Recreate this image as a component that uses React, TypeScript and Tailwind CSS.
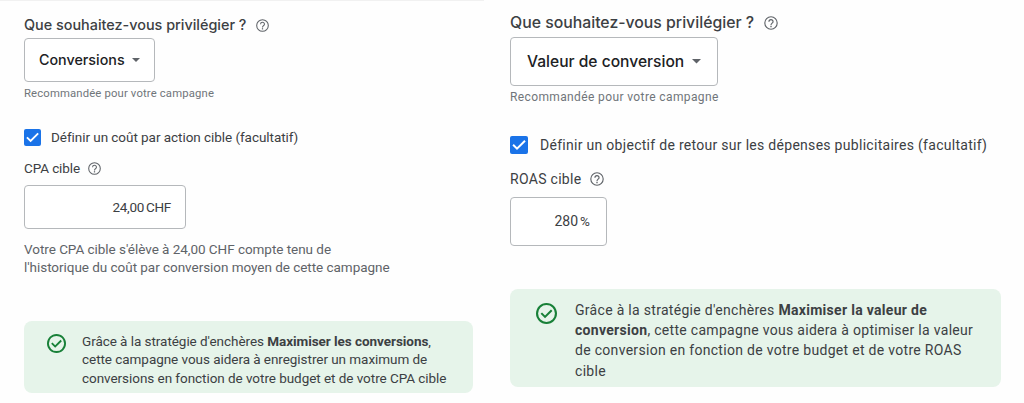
import type { ReactNode } from "react";

function HelpIcon({ className }: { className: string }) {
  return (
    <svg
      viewBox="0 0 24 24"
      fill="none"
      stroke="#5f6368"
      strokeWidth="1.7"
      className={`shrink-0 ${className}`}
    >
      <circle cx="12" cy="12" r="9.3" />
      <path d="M8.9 10a3.1 3.1 0 1 1 6.2 0c0 2.1-3.1 2.5-3.1 5" />
      <path d="M12 16.3v2" strokeWidth="2" />
    </svg>
  );
}

function Caret({ className }: { className: string }) {
  return (
    <svg viewBox="0 0 10 5" fill="#5f6368" className={`shrink-0 ${className}`}>
      <path d="M0 0h10L5 5z" />
    </svg>
  );
}

function CheckBox({ className }: { className: string }) {
  return (
    <span
      role="checkbox"
      aria-checked="true"
      className={`block shrink-0 rounded-[2px] bg-[#1a73e8] ${className}`}
    >
      <svg viewBox="0 0 18 18" className="block w-full h-full" fill="none">
        <path d="M3.1 8.8 7 12.7 15 4.7" stroke="#fff" strokeWidth="2" />
      </svg>
    </span>
  );
}

function Notice({
  className,
  iconClassName,
  children,
}: {
  className: string;
  iconClassName: string;
  children: ReactNode;
}) {
  return (
    <div
      className={`flex items-start rounded-lg bg-[#e6f4ea] text-[#3c4043] ${className}`}
    >
      <svg
        viewBox="2 2 20 20"
        fill="#188038"
        className={`shrink-0 ${iconClassName}`}
      >
        <path d="m10.6 16.6 7.05-7.05-1.4-1.4-5.65 5.65-2.85-2.85-1.4 1.4ZM12 22q-2.075 0-3.9-.788a10.1 10.1 0 0 1-3.175-2.137q-1.35-1.35-2.137-3.175A9.7 9.7 0 0 1 2 12q0-2.075.788-3.9a10.1 10.1 0 0 1 2.137-3.175q1.35-1.35 3.175-2.137A9.7 9.7 0 0 1 12 2q2.075 0 3.9.788a10.1 10.1 0 0 1 3.175 2.137q1.35 1.35 2.137 3.175A9.7 9.7 0 0 1 22 12q0 2.075-.788 3.9a10.1 10.1 0 0 1-2.137 3.175q-1.35 1.35-3.175 2.137A9.7 9.7 0 0 1 12 22m0-2q3.35 0 5.675-2.325T20 12t-2.325-5.675T12 4 6.325 6.325 4 12t2.325 5.675T12 20" />
      </svg>
      <p>{children}</p>
    </div>
  );
}

function ConversionsPanel() {
  return (
    <section className="w-[484px] shrink-0 pl-6 pt-[15px] border-t border-[#f1f1f1]">
      {/* Goal */}
      <div className="flex items-center h-[18px]">
        <h2 className="font-['Inter',sans-serif] font-medium text-[14.4px] text-[#3c4043] whitespace-nowrap">
          Que souhaitez-vous privilégier ?
        </h2>
        <HelpIcon className="ml-[9px] w-[15px] h-[15px]" />
      </div>
      <button
        type="button"
        className="mt-1 flex items-center w-[131px] h-[44px] pl-[14px] rounded-[4px] border border-[#b5b8bb] bg-white font-['Inter',sans-serif] font-medium text-[14.3px] text-[#202124]"
      >
        Conversions
        <Caret className="ml-[7px] w-2 h-1" />
      </button>
      <p className="mt-1 text-[11.3px] leading-4 tracking-[0.15px] text-[#70757a]">
        Recommandée pour votre campagne
      </p>

      {/* Target CPA */}
      <div className="mt-[26px] flex items-center h-[18px] text-[13.5px] tracking-[-0.05px] text-[#3c4043]">
        <CheckBox className="w-[17px] h-[17px] mr-[10px]" />
        Définir un coût par action cible (facultatif)
      </div>
      <div className="mt-[13px] flex items-center h-[18px] text-[13.5px] tracking-[-0.1px] text-[#3c4043]">
        CPA cible
        <HelpIcon className="ml-[7px] w-[15px] h-[15px]" />
      </div>
      <div className="mt-2 flex items-center justify-end w-[162px] h-[44px] pt-px pr-[14px] rounded-[4px] border border-[#b5b8bb] bg-white text-[13.5px] text-[#3c4043]">
        <span className="tracking-[-0.3px]">24,00</span>
        <span className="ml-[2px] tracking-[-0.3px]">CHF</span>
      </div>
      <p className="mt-[11px] text-[13.5px] leading-[18.4px] tracking-[-0.04px] text-[#5f6368]">
        Votre CPA cible s'élève à 24,00 CHF compte tenu de
        <br />
        l'historique du coût par conversion moyen de cette campagne
      </p>

      <Notice
        className="mt-[44px] w-[449px] h-[72px] pl-[23px] pt-[11px] text-[13.5px] leading-[18.4px] tracking-[-0.05px]"
        iconClassName="mt-[2px] mr-4 w-[19px] h-[19px]"
      >
        Grâce à la stratégie d'enchères <strong>Maximiser les conversions</strong>,
        <br />
        cette campagne vous aidera à enregistrer un maximum de
        <br />
        conversions en fonction de votre budget et de votre CPA cible
      </Notice>
    </section>
  );
}

function ConversionValuePanel() {
  return (
    <section className="grow pl-[26px] pt-[13px]">
      {/* Goal */}
      <div className="flex items-center h-5">
        <h2 className="font-['Inter',sans-serif] font-medium text-[15.8px] text-[#3c4043] whitespace-nowrap">
          Que souhaitez-vous privilégier ?
        </h2>
        <HelpIcon className="ml-[9px] w-4 h-4" />
      </div>
      <button
        type="button"
        className="mt-1 flex items-center w-[208px] h-[49px] pl-4 rounded-[4px] border border-[#b5b8bb] bg-white font-['Inter',sans-serif] font-medium text-[15.6px] text-[#202124]"
      >
        Valeur de conversion
        <Caret className="ml-2 w-[9px] h-[4.5px]" />
      </button>
      <p className="mt-[3px] text-[12px] leading-4 tracking-[0.38px] text-[#70757a]">
        Recommandée pour votre campagne
      </p>

      {/* Target ROAS */}
      <div className="mt-[30px] flex items-center h-5 text-[14px] tracking-[0.29px] text-[#3c4043]">
        <CheckBox className="w-[18px] h-[18px] mr-3" />
        Définir un objectif de retour sur les dépenses publicitaires (facultatif)
      </div>
      <div className="mt-[14px] flex items-center h-5 text-[14px] tracking-[0.3px] text-[#3c4043]">
        ROAS cible
        <HelpIcon className="ml-2 w-4 h-4" />
      </div>
      <div className="mt-2 flex items-center justify-end w-[97px] h-[49px] pr-4 rounded-[4px] border border-[#b5b8bb] bg-white text-[14px] text-[#3c4043]">
        <span>280</span>
        <span className="ml-[2px] text-[13.5px]">%</span>
      </div>

      <Notice
        className="mt-[43px] w-[491px] h-[98px] pl-[26px] pt-[11px] text-[14px] leading-[20.2px] tracking-[0.3px]"
        iconClassName="mt-[3px] mr-[18px] w-[21px] h-[21px]"
      >
        Grâce à la stratégie d'enchères <strong>Maximiser la valeur de</strong>
        <br />
        <strong>conversion</strong>, cette campagne vous aidera à optimiser la valeur
        <br />
        de conversion en fonction de votre budget et de votre ROAS
        <br />
        cible
      </Notice>
    </section>
  );
}

export default function App() {
  return (
    <div className="flex w-[1024px] h-[403px] overflow-hidden bg-[#fefefe] font-['Roboto',sans-serif]">
      <ConversionsPanel />
      <ConversionValuePanel />
    </div>
  );
}
